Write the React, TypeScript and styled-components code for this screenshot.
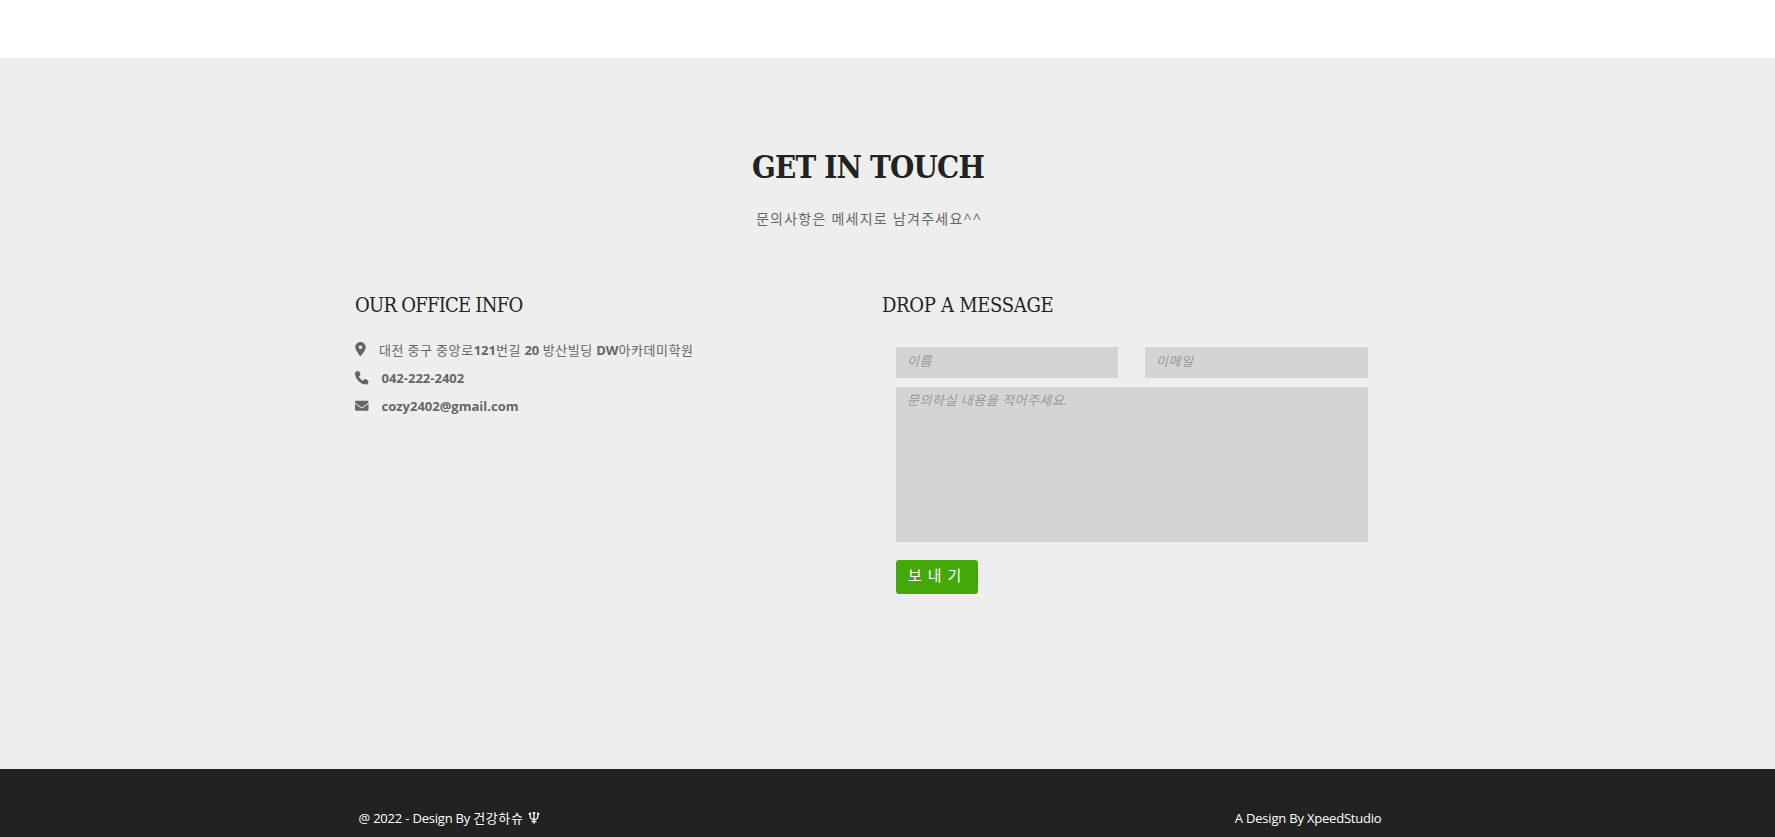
import React from "react";
import styled, { createGlobalStyle } from "styled-components";
import { FaLocationDot, FaPhone, FaEnvelope } from "react-icons/fa6";

const GlobalStyle = createGlobalStyle`
  * { box-sizing: border-box; }
  body {
    margin: 0;
    background: #fff;
    font-family: "Open Sans", "Noto Sans CJK KR", sans-serif;
    font-size: 13px;
    color: #666;
  }
`;

const Page = styled.div`
  display: flex;
  flex-direction: column;
  height: 837px;
  overflow: hidden;
  padding-top: 58px;
`;

const Contact = styled.section`
  flex: 0 0 711px;
  background: #eee;
  padding: 85px 394px 0 355px;
`;

const slab = `"Roboto Slab", "DejaVu Serif Condensed", "DejaVu Serif", serif`;

const Title = styled.h2`
  margin: 0;
  padding-top: 2px;
  font: 700 31px/44px ${slab};
  letter-spacing: -0.8px;
  text-align: center;
  color: #222;
`;

const Subtitle = styled.p`
  margin: 20px 0 0;
  padding-left: 2px;
  font-size: 14px;
  line-height: 20px;
  letter-spacing: 1.25px;
  text-align: center;
  font-weight: 400;
`;

const Columns = styled.div`
  display: grid;
  grid-template-columns: 527px 1fr;
  margin-top: 64px;
`;

const ColumnTitle = styled.h3<{ $tracking: number }>`
  margin: 0;
  font: 300 20px/24px ${slab};
  letter-spacing: ${(p) => p.$tracking}px;
  white-space: nowrap;
  color: #222;
`;

const InfoList = styled.ul`
  list-style: none;
  margin: 19px 0 0;
  padding: 0;
`;

const InfoItem = styled.li<{ $indent: number; $lift?: number }>`
  display: grid;
  grid-template-columns: ${(p) => p.$indent}px auto;
  align-items: center;
  height: 28px;
  padding-bottom: ${(p) => p.$lift ?? 0}px;
  font-weight: 700;
  white-space: nowrap;
`;

const PinIcon = styled(FaLocationDot)`
  width: 11px;
  height: 14px;
`;

const Hangul = styled.span`
  font-family: "Noto Sans CJK KR", sans-serif;
  font-weight: 400;
  letter-spacing: 0.57px;
`;

const Form = styled.form`
  display: grid;
  grid-template-columns: 222px 223px;
  column-gap: 27px;
  row-gap: 9px;
  margin: 30px 0 0 14px;
`;

const fieldStyle = `
  border: 0;
  border-radius: 0;
  background: #d4d4d4;
  font: italic 13px/18px "Open Sans", "Noto Sans CJK KR", sans-serif;
  letter-spacing: 0.5px;
  outline: 0;
  width: 100%;
  &::placeholder { color: #999; opacity: 1; }
`;

const Input = styled.input`
  ${fieldStyle}
  height: 31px;
  padding: 0 11px 3px;
`;

const TextArea = styled.textarea`
  ${fieldStyle}
  grid-column: 1 / -1;
  display: block;
  height: 155px;
  padding: 4px 11px;
  resize: none;
`;

const SendButton = styled.button`
  width: 82px;
  height: 34px;
  margin-top: 9px;
  padding: 0 0 4px 12px;
  border: 0;
  border-radius: 3px;
  background: #43a908;
  color: #fff;
  text-align: left;
  font: 400 15px/20px "Open Sans", "Noto Sans CJK KR", sans-serif;
  letter-spacing: 1px;
`;

const Footer = styled.footer`
  flex: 1;
  display: flex;
  justify-content: space-between;
  align-items: flex-start;
  background: #222;
  color: #fff;
  padding: 39px 393.5px 0 358.5px;
  line-height: 20px;
  letter-spacing: -0.2px;
`;

const Credit = styled.span`
  display: flex;
  align-items: center;
  white-space: pre;
`;

const Trident = styled.svg`
  margin-left: 5px;
`;

export default function App() {
  return (
    <>
      <GlobalStyle />
      <Page>
        <Contact>
          <Title>GET IN TOUCH</Title>
          <Subtitle>문의사항은 메세지로 남겨주세요^^</Subtitle>
          <Columns>
            <div>
              <ColumnTitle $tracking={-0.75}>OUR OFFICE INFO</ColumnTitle>
              <InfoList>
                <InfoItem $indent={24} $lift={2}>
                  <PinIcon />
                  <span>
                    <Hangul>대전 중구 중앙로</Hangul>121<Hangul>번길</Hangul> 20 <Hangul>방산빌딩</Hangul> DW
                    <Hangul>아카데미학원</Hangul>
                  </span>
                </InfoItem>
                <InfoItem $indent={26.5}>
                  <FaPhone size={13.5} />
                  <span>042-222-2402</span>
                </InfoItem>
                <InfoItem $indent={26.5}>
                  <FaEnvelope size={13.5} />
                  <span>cozy2402@gmail.com</span>
                </InfoItem>
              </InfoList>
            </div>
            <div>
              <ColumnTitle $tracking={-0.3}>DROP A MESSAGE</ColumnTitle>
              <Form>
                <Input placeholder="이름" />
                <Input placeholder="이메일" />
                <TextArea placeholder="문의하실 내용을 적어주세요." />
                <SendButton type="button">보 내 기</SendButton>
              </Form>
            </div>
          </Columns>
        </Contact>
        <Footer>
          <Credit>
            @ 2022 - Design By <Hangul>건강하슈</Hangul>
            <Trident width="12" height="12" viewBox="0 0 12 12" fill="none" stroke="#fff" strokeWidth="1.3">
              <path d="M6 0.3V11.7M0.6 2.2L2.2 1.2V4.5Q2.4 7.4 6 7.4Q9.6 7.4 9.8 4.5V1.2L11.4 2.2M3.6 9.5H8.4M4.8 1.4L6 0.3L7.2 1.4" />
            </Trident>
          </Credit>
          <Credit>A Design By XpeedStudio</Credit>
        </Footer>
      </Page>
    </>
  );
}
